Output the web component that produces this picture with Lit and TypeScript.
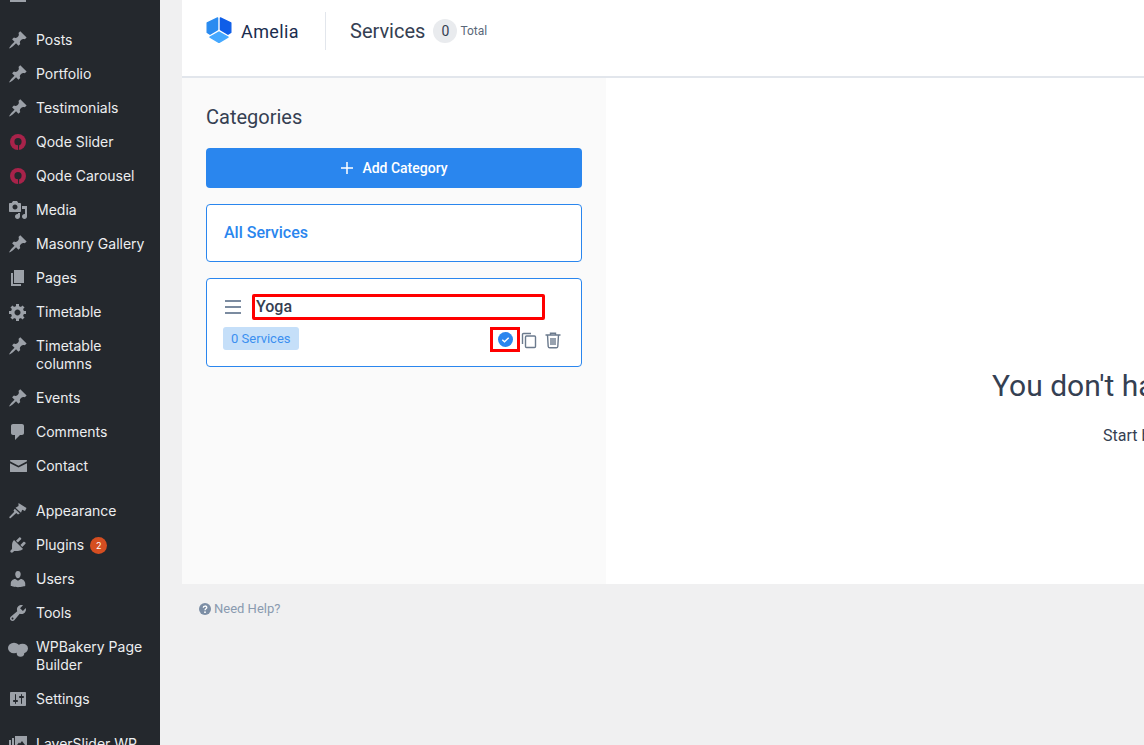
import { LitElement, html, css, svg } from "lit";
import { customElement } from "lit/decorators.js";

const pin = svg`<path d="M10.44 3.02l1.82-1.82 6.36 6.35-1.83 1.82c-1.05-.68-2.48-.57-3.41.36l-.75.75c-.92.93-1.04 2.35-.35 3.41l-1.83 1.82-2.41-2.41-2.8 2.79c-.42.42-3.38 2.71-3.8 2.29s1.86-3.39 2.28-3.81l2.79-2.79L4.1 9.36l1.83-1.82c1.05.69 2.48.57 3.4-.36l.75-.75c.93-.92 1.05-2.35.36-3.41z"/>`;
const qode = svg`<circle cx="10" cy="10" r="8" fill="#a8234a"/><circle cx="10" cy="9.7" r="3.6" fill="#24282d"/><path d="M10 12.500h1.300l-.5 5.500h-.8z" fill="#24282d"/>`;
const media = svg`<path d="M13 11V4c0-.55-.45-1-1-1h-1.67L9 1H5L3.67 3H2c-.55 0-1 .45-1 1v7c0 .55.45 1 1 1h10c.55 0 1-.45 1-1zM7 4.5c1.38 0 2.5 1.12 2.5 2.5S8.38 9.5 7 9.5 4.5 8.38 4.5 7 5.62 4.5 7 4.5zM14 6h5v10.5c0 1.38-1.12 2.5-2.5 2.5S14 17.88 14 16.5s1.12-2.5 2.5-2.5c.17 0 .34.02.5.05V9h-3V6zm-4 8.05V13h2v3.5c0 1.38-1.12 2.5-2.5 2.5S7 17.88 7 16.5 8.12 14 9.5 14c.17 0 .34.02.5.05z"/>`;
const page = svg`<path d="M6 15V2h10v13H6zm-1 1h8v2H3V5h2v11z"/>`;
const gear = svg`<path d="M18 12h-2.18c-.17.7-.44 1.35-.81 1.93l1.54 1.54-2.1 2.1-1.54-1.54c-.58.36-1.23.63-1.91.79V19H8v-2.18c-.68-.16-1.33-.43-1.91-.79l-1.54 1.54-2.12-2.12 1.54-1.54c-.36-.58-.63-1.23-.79-1.91H1V9.03h2.17c.16-.7.44-1.35.8-1.94L2.43 5.55l2.1-2.1 1.54 1.54c.58-.37 1.24-.64 1.93-.81V2h3v2.18c.68.16 1.33.43 1.91.79l1.54-1.54 2.12 2.12-1.54 1.54c.36.59.64 1.24.8 1.94H18V12zm-8.5 1.5c1.66 0 3-1.34 3-3s-1.34-3-3-3-3 1.34-3 3 1.34 3 3 3z"/>`;
const comment = svg`<path d="M5 2h9c1.1 0 2 .9 2 2v7c0 1.1-.9 2-2 2h-2l-5 5v-5H5c-1.1 0-2-.9-2-2V4c0-1.1.9-2 2-2z"/>`;
const mail = svg`<path d="M2.600 4h15.800c.4 0 .6.2.6.6v.7l-8.500 4.400L2 5.300v-.7c0-.4.2-.6.6-.6zM2 7.200l8.500 4.400L19 7.200v8.200c0 .4-.2.6-.6.6H2.600c-.4 0-.6-.2-.6-.6z"/>`;
const brush = svg`<path d="M10.500 2l8 5-1.500 3-2.800-1.200L13 11.800 7.500 6.800l3-1.800zM6.800 7.800l5 4.700-1.800 1-1.700-1.500-5.500 5c-.8.800-2-.500-1.300-1.300l4.800-4.900-.8-1.300z"/>`;
const plug = svg`<path d="M13.11 4.36L9.87 7.6 8 5.73l3.24-3.24c.35-.34 1.05-.2 1.56.32.52.51.66 1.21.31 1.55zm-8 1.77l.91-1.12 9.01 9.01-1.19.84c-.71.71-2.63 1.16-3.82 1.16H6.14L4.9 17.26c-.59.59-1.54.59-2.12 0-.59-.58-.59-1.53 0-2.12l1.24-1.24v-3.88c0-1.13.4-3.19 1.09-3.89zm7.26 3.97l3.24-3.24c.34-.35 1.04-.21 1.55.31.52.51.66 1.21.31 1.55l-3.24 3.25z"/>`;
const user = svg`<path d="M10 9.25c-2.27 0-2.73-3.44-2.73-3.44C7 4.02 7.82 2 9.97 2c2.16 0 2.98 2.02 2.71 3.81 0 0-.41 3.44-2.68 3.44zm0 2.57L12.72 10c2.39 0 4.52 2.33 4.52 4.53v2.49s-3.65 1.13-7.24 1.13c-3.65 0-7.24-1.13-7.24-1.13v-2.49c0-2.25 1.94-4.48 4.47-4.48z"/>`;
const wrench = svg`<path d="M16.68 9.77c-1.34 1.34-3.3 1.67-4.95.99l-5.41 6.52c-.99.99-2.59.99-3.58 0s-.99-2.59 0-3.57l6.52-5.42c-.68-1.65-.35-3.61.99-4.95 1.28-1.28 3.12-1.62 4.72-1.06l-2.89 2.89 2.82 2.82 2.86-2.87c.53 1.58.18 3.39-1.08 4.65zM3.81 16.21c.4.39 1.04.39 1.43 0 .4-.4.4-1.04 0-1.43-.39-.4-1.03-.4-1.43 0-.39.39-.39 1.03 0 1.43z"/>`;
const cloud = svg`<ellipse cx="6" cy="11" rx="6" ry="5.200"/><ellipse cx="14.500" cy="11.500" rx="5.500" ry="4.800"/><ellipse cx="12.500" cy="16" rx="3.800" ry="3.800"/>`;
const sliders = svg`<path d="M18 16V4c0-.55-.45-1-1-1H3c-.55 0-1 .45-1 1v12c0 .55.45 1 1 1h14c.55 0 1-.45 1-1zM8 11h1c.55 0 1 .45 1 1s-.45 1-1 1H8v1.500c0 .28-.22.5-.5.5s-.5-.22-.5-.5V13H6c-.55 0-1-.45-1-1s.45-1 1-1h1V5.500c0-.28.22-.5.5-.5s.5.22.5.5V11zm5-2h-1c-.55 0-1-.45-1-1s.45-1 1-1h1V5.500c0-.28.22-.5.5-.5s.5.22.5.5V7h1c.55 0 1 .45 1 1s-.45 1-1 1h-1v5.500c0 .28-.22.5-.5.5s-.5-.22-.5-.5V9z"/>`;
const layers = svg`<path d="M7 2h12v11H7zM9 11h8l-3-4-2 2.500-1-1zM4 4h2v11h10v2H4zM1 6h2v11h10v2H1z"/>`;
const dash = svg`<path d="M3 2h14v12H3zM2 15h16v2H2z"/>`;

type Item = { label: string; icon: unknown; gap?: boolean; badge?: string };
const items: Item[] = [
  { label: "Dashboard", icon: dash },
  { label: "Posts", icon: pin, gap: true },
  { label: "Portfolio", icon: pin },
  { label: "Testimonials", icon: pin },
  { label: "Qode Slider", icon: qode },
  { label: "Qode Carousel", icon: qode },
  { label: "Media", icon: media },
  { label: "Masonry Gallery", icon: pin },
  { label: "Pages", icon: page },
  { label: "Timetable", icon: gear },
  { label: "Timetable columns", icon: pin },
  { label: "Events", icon: pin },
  { label: "Comments", icon: comment },
  { label: "Contact", icon: mail },
  { label: "Appearance", icon: brush, gap: true },
  { label: "Plugins", icon: plug, badge: "2" },
  { label: "Users", icon: user },
  { label: "Tools", icon: wrench },
  { label: "WPBakery Page Builder", icon: cloud },
  { label: "Settings", icon: sliders },
  { label: "LayerSlider WP", icon: layers, gap: true },
];

@customElement("app-root")
export class AppRoot extends LitElement {
  static styles = css`
    :host { display: block; height: 745px; overflow: hidden; background: #f0f0f1; font-family: Roboto, "Liberation Sans", sans-serif; color: #354052; }
    .frame { display: flex; height: 745px; }
    .sidebar { flex: 0 0 160px; background: #24282d; overflow: hidden; font-family: Inter, "Liberation Sans", sans-serif; font-size: 14px; line-height: 18px; color: #eceef0; }
    .menu { margin-top: -22px; display: flex; flex-direction: column; }
    .item { display: flex; gap: 8px; padding: 8px 12px 8px 8px; }
    .item.gap { margin-top: 11px; }
    .ico { flex: 0 0 20px; width: 20px; height: 20px; margin: -1px 0; fill: #9ca1a8; }
    .label { flex: 1; }
    .badge { display: inline-block; width: 17px; height: 17px; line-height: 17px; margin-left: 2px; border-radius: 50%; background: #d54e21; color: #fff; font-size: 9px; text-align: center; vertical-align: 1px; }
    .main { flex: 1; min-width: 0; margin-left: 22px; display: flex; flex-direction: column; }
    header { height: 62px; padding: 0 0 14px 24px; background: #fff; border-bottom: 2px solid #e2e6ec; display: flex; align-items: center; }
    .logo { display: flex; align-items: center; gap: 9px; height: 38px; width: 119px; border-right: 1px solid #e2e6ec; }
    .logo svg { width: 26px; height: 26px; margin-top: -2px; }
    .logo span { font-size: 18px; font-weight: 400; color: #1a2c4e; letter-spacing: 0.4px; }
    .title { margin-left: 24px; font-size: 20px; }
    .count { width: 24px; height: 24px; margin-left: 8px; border-radius: 50%; background: #e9ebee; display: flex; align-items: center; justify-content: center; font-size: 14px; }
    .total { margin-left: 3px; font-size: 12px; color: #5a6879; }
    .body { display: flex; height: 506px; }
    .panel { flex: 0 0 424px; box-sizing: border-box; background: #fafafa; padding: 27px 24px 0; }
    h2 { margin: 0 0 19px; font-size: 20px; font-weight: 400; line-height: 24px; }
    .add { height: 40px; border-radius: 4px; background: #2a86ee; color: #fff; display: flex; align-items: center; justify-content: center; gap: 8px; font-size: 14px; font-weight: 500; }
    .add svg { width: 14px; height: 14px; stroke: #fff; stroke-width: 1.5; }
    .all { margin-top: 16px; height: 58px; box-sizing: border-box; background: #fff; border: 1px solid #2a86ee; border-radius: 4px; padding: 0 0 2px 17px; display: flex; align-items: center; font-size: 16px; font-weight: 500; color: #2a86ee; }
    .card { margin-top: 16px; box-sizing: border-box; height: 89px; background: #fff; border: 1px solid #2a86ee; border-radius: 4px; padding: 15px 19px 14px 16px; display: flex; flex-direction: column; gap: 7px; }
    .row { display: flex; align-items: center; }
    .burger { width: 20px; height: 14px; margin-right: 9px; stroke: #7b8ba0; stroke-width: 2; }
    .name { width: 293px; height: 26px; box-sizing: border-box; border: 3px solid #f00; border-radius: 2px; padding: 0 0 2px 1px; display: flex; align-items: center; font-size: 16px; font-weight: 500; }
    .row2 { align-items: flex-start; }
    .pill { height: 23px; padding: 0 8px; border-radius: 3px; background: #c5dff9; color: #3b8ff0; font-size: 13px; display: flex; align-items: center; }
    .spacer { flex: 1; }
    .check { width: 30px; height: 25px; box-sizing: border-box; border: 3px solid #f00; display: flex; align-items: center; justify-content: center; }
    .check svg { width: 15px; height: 15px; }
    .tool { width: 18px; height: 18px; margin-top: 4px; fill: none; stroke: #6b7a8d; stroke-width: 1.4; }
    .trash { margin-left: 6px; }
    .empty { flex: 1; min-width: 0; background: #fff; overflow: hidden; white-space: nowrap; padding: 289px 0 0 386px; }
    .empty h3 { margin: 0; font-size: 30px; line-height: 38px; font-weight: 400; }
    .empty p { margin: 21px 0 0 111px; font-size: 16px; line-height: 20px; }
    footer { display: flex; align-items: center; gap: 3px; padding: 16px 0 0 17px; font-size: 13px; line-height: 18px; color: #8a9bb0; }
    footer svg { width: 12px; height: 12px; }
  `;

  render() {
    return html`<div class="frame">
      <nav class="sidebar"><div class="menu">
        ${items.map(
          (i) => html`<div class="item ${i.gap ? "gap" : ""}">
            <svg class="ico" viewBox="0 0 20 20">${i.icon}</svg>
            <div class="label">${i.label}${i.badge ? html` <span class="badge">${i.badge}</span>` : ""}</div>
          </div>`
        )}
      </div></nav>
      <div class="main">
        <header>
          <div class="logo">
            <svg viewBox="0 0 26 26" stroke-linejoin="round" stroke-width="1.400">
              <path d="M11.600 1L1.200 6v9.500L4 17.200l7.600-4.600z" fill="#2a8bf0" stroke="#2a8bf0"/>
              <path d="M14.400 1l10.400 5v9.500L22 17.200l-7.600-4.600z" fill="#0f5ee8" stroke="#0f5ee8"/>
              <path d="M13 15l9 5.200-9 5.300-9-5.300z" fill="#45a8ff" stroke="#45a8ff"/>
            </svg>
            <span>Amelia</span>
          </div>
          <div class="title">Services</div>
          <div class="count">0</div>
          <div class="total">Total</div>
        </header>
        <div class="body">
          <section class="panel">
            <h2>Categories</h2>
            <div class="add">
              <svg viewBox="0 0 14 14"><path d="M7 1v12M1 7h12"/></svg>
              <span>Add Category</span>
            </div>
            <div class="all">All Services</div>
            <div class="card">
              <div class="row">
                <svg class="burger" viewBox="0 0 20 14"><path d="M2 1h16M2 7h16M2 13h16"/></svg>
                <div class="name">Yoga</div>
              </div>
              <div class="row row2">
                <div class="pill">0 Services</div>
                <div class="spacer"></div>
                <div class="check">
                  <svg viewBox="0 0 15 15"><circle cx="7.500" cy="7.500" r="7.500" fill="#2a86ee"/><path d="M4.300 7.800l2.200 2 4.200-4" fill="none" stroke="#fff" stroke-width="1.400"/></svg>
                </div>
                <svg class="tool" viewBox="0 0 18 18"><path d="M11 2.500H3.500a1 1 0 0 0-1 1V13"/><rect x="5.500" y="5" width="10" height="11.500" rx="1"/></svg>
                <svg class="tool trash" viewBox="0 0 18 18"><path d="M1.500 4h15M6.500 4V2.200h5V4M3.500 4l.7 11.500a1.500 1.500 0 0 0 1.500 1.300h6.600a1.500 1.500 0 0 0 1.500-1.300L14.500 4M7 7v7M9 7v7M11 7v7"/></svg>
              </div>
            </div>
          </section>
          <section class="empty">
            <h3>You don't have any services here</h3>
            <p>Start by clicking the Add Service button</p>
          </section>
        </div>
        <footer>
          <svg viewBox="0 0 12 12"><circle cx="6" cy="6" r="6" fill="#7c8ea5"/><path d="M4.300 4.700c0-2.200 3.500-2.200 3.500-.2 0 1.300-1.800 1.300-1.800 2.700" fill="none" stroke="#fff" stroke-width="1.300"/><circle cx="6" cy="9.200" r=".9" fill="#fff"/></svg>
          <span>Need Help?</span>
        </footer>
      </div>
    </div>`;
  }
}
